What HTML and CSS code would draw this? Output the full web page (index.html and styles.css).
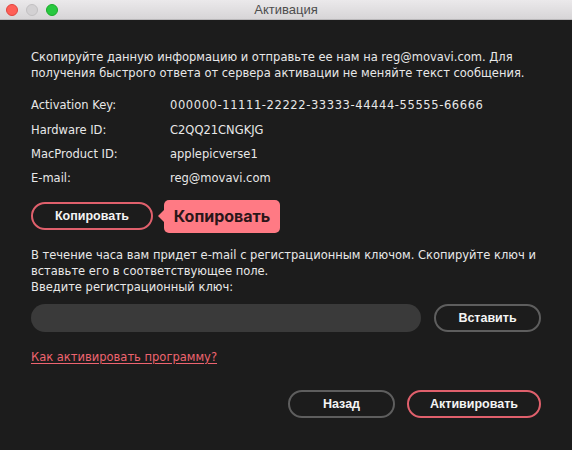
FILE: index.html
```html
<!DOCTYPE html>
<html lang="ru">
<head>
<meta charset="utf-8">
<title>Активация</title>
<link rel="stylesheet" href="styles.css">
</head>
<body>
<div class="window">
  <div class="titlebar">
    <div class="lights">
      <span class="light red"></span>
      <span class="light gray"></span>
      <span class="light green"></span>
    </div>
    <div class="title">Активация</div>
    <div></div>
  </div>
  <div class="content">
    <p class="msg">Скопируйте данную информацию и отправьте ее нам на reg@movavi.com. Для получения быстрого ответа от сервера активации не меняйте текст сообщения.</p>
    <div class="info">
      <div class="label">Activation Key:</div><div class="value key">000000-11111-22222-33333-44444-55555-66666</div>
      <div class="label">Hardware ID:</div><div class="value">C2QQ21CNGKJG</div>
      <div class="label">MacProduct ID:</div><div class="value">applepicverse1</div>
      <div class="label">E-mail:</div><div class="value">reg@movavi.com</div>
    </div>
    <div class="copy-row">
      <button class="btn btn-accent btn-copy">Копировать</button>
      <div class="tip">Копировать</div>
    </div>
    <p class="msg msg2">В течение часа вам придет e-mail с регистрационным ключом. Скопируйте ключ и вставьте его в соответствующее поле.<br>Введите регистрационный ключ:</p>
    <div class="key-row">
      <div class="key-input"></div>
      <button class="btn btn-plain btn-paste">Вставить</button>
    </div>
    <a class="help" href="#">Как активировать программу?</a>
    <div class="actions">
      <button class="btn btn-plain btn-back">Назад</button>
      <button class="btn btn-accent btn-activate">Активировать</button>
    </div>
  </div>
</div>
</body>
</html>
```
FILE: styles.css
```css
html, body {
  margin: 0;
  padding: 0;
  background: #1c1c1c;
}
.window {
  width: 572px;
  height: 450px;
  background: #1c1c1c;
  font-family: "DejaVu Sans", "Liberation Sans", sans-serif;
  font-size: 11.5px;
  color: #e8e8e8;
  overflow: hidden;
}
.titlebar {
  height: 20px;
  display: grid;
  grid-template-columns: 1fr auto 1fr;
  align-items: center;
  background: linear-gradient(#ebe9eb, #d7d5d7);
  border-bottom: 1px solid #b9b7b9;
  box-sizing: border-box;
}
.lights {
  display: flex;
  gap: 8px;
  padding-left: 6px;
  align-items: center;
}
.light {
  width: 12px;
  height: 12px;
  border-radius: 50%;
  box-sizing: border-box;
}
.red { background: #fe5f57; border: 1px solid #e0443e; }
.gray { background: #d3d1d3; border: 1px solid #c2c0c2; }
.green { background: #28c840; border: 1px solid #1aab29; }
.title {
  color: #4d4d4d;
  font-family: "Liberation Sans", Arial, sans-serif;
  font-size: 13px;
}
.content {
  padding: 0 31px 0 31px;
}
.msg {
  margin: 29px 0 0;
  line-height: 16px;
}
.info {
  margin-top: 12px;
  display: grid;
  grid-template-columns: 139px 1fr;
  grid-auto-rows: 24.4px;
  align-items: center;
}
.key { letter-spacing: 0.6px; }
.copy-row {
  margin-top: 9px;
  display: flex;
  align-items: center;
  gap: 11px;
  height: 33px;
}
.btn {
  font-family: "Liberation Sans", Arial, sans-serif;
  font-weight: bold;
  font-size: 12.5px;
  color: #f4f4f4;
  background: #1c1c1c;
  border-radius: 14px;
  height: 28px;
  box-sizing: border-box;
  padding: 0;
  cursor: default;
}
.btn-accent { border: 2px solid #e0606c; }
.btn-plain { border: 2px solid #5e5e5e; }
.btn-copy { width: 122px; }
.tip {
  position: relative;
  height: 33px;
  width: 116px;
  background: #ff7a84;
  border-radius: 5px;
  color: #2a1619;
  font-family: "Inter", "Noto Sans", sans-serif;
  font-weight: 700;
  font-size: 16px;
  display: flex;
  align-items: center;
  justify-content: center;
  box-sizing: border-box;
}
.tip::before {
  content: "";
  position: absolute;
  left: -6px;
  top: 50%;
  margin-top: -6px;
  border-style: solid;
  border-width: 6px 6px 6px 0;
  border-color: transparent #ff7a84 transparent transparent;
}
.msg2 {
  margin-top: 14px;
}
.key-row {
  margin-top: 9px;
  display: flex;
  align-items: center;
  gap: 13px;
}
.key-input {
  flex: 1;
  height: 28px;
  border-radius: 14px;
  background: #3a3a3a;
}
.btn-paste { width: 107px; }
.help {
  display: block;
  margin-top: 17px;
  line-height: 16px;
  color: #ee6470;
  text-decoration: underline;
  text-underline-offset: 2px;
  width: max-content;
}
.actions {
  margin-top: 25px;
  display: flex;
  justify-content: flex-end;
  gap: 12px;
}
.btn-back { width: 107px; }
.btn-activate { width: 134px; }
```
